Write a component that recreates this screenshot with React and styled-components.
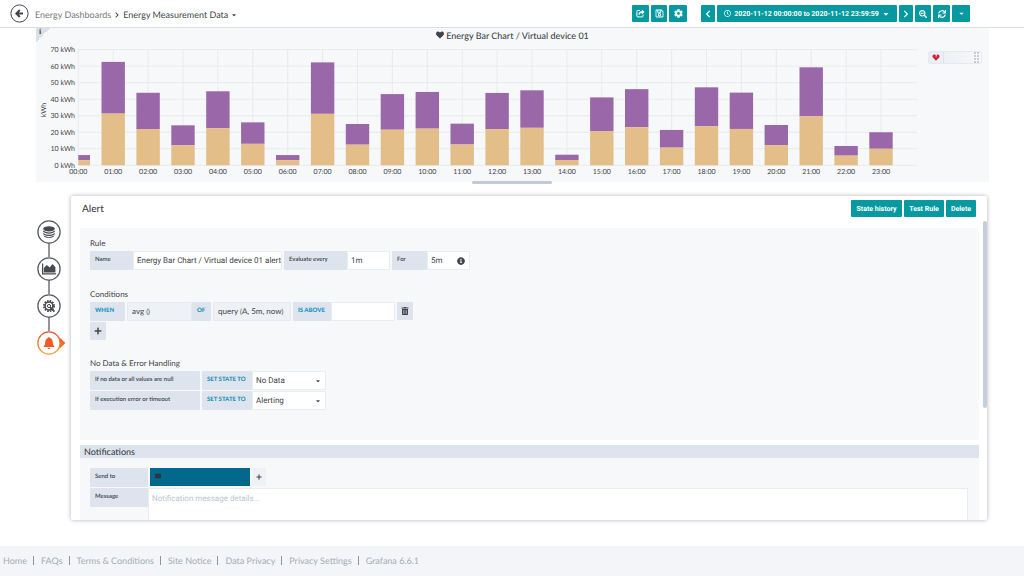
import React, { useState } from "react";
import styled, { createGlobalStyle } from "styled-components";
import {
	FaCaretDown,
	FaChevronLeft,
	FaChevronRight,
	FaCog,
	FaEnvelope,
	FaHeart,
	FaInfoCircle,
	FaPlus,
	FaRegClock,
	FaRegSave,
	FaSearchMinus,
	FaSync,
	FaTrashAlt
} from "react-icons/fa";

const TEAL = "#069aa0";
const TEXT = "#41444b";
const MUTED = "#767980";
const PANEL = "#f7f8fa";
const LABEL = "#dde4ed";
const BORDER = "#e9edf2";
const BLUE = "#1e93bd";
const PURPLE = "#9a68a9";
const SAND = "#e3be88";

const HOURS = [
	6.2, 62.6, 43.9, 24.2, 44.8, 26, 6.2, 62.3, 25, 43.1, 44.4, 25.2, 43.8, 45.4,
	6.4, 41.1, 46.1, 21.4, 47.2, 44, 24.4, 59.3, 11.7, 20
];

const FOOTER_LINKS = [
	"Home",
	"FAQs",
	"Terms & Conditions",
	"Site Notice",
	"Data Privacy",
	"Privacy Settings",
	"Grafana 6.6.1"
];

const GlobalStyle = createGlobalStyle`
	body {
		margin: 0;
		background: #fff;
		color: ${TEXT};
		font-family: Lato, "Liberation Sans", sans-serif;
		font-size: 8px;
		text-rendering: geometricPrecision;
	}
	* {
		box-sizing: border-box;
	}
	button, input, select, textarea {
		font-family: Roboto, "Liberation Sans", sans-serif;
		color: ${TEXT};
		margin: 0;
		outline: 0;
		text-rendering: inherit;
	}
	h1, h2, h3 {
		margin: 0;
		font-weight: 500;
	}
`;

const Page = styled.div`
	display: flex;
	flex-direction: column;
	height: 100vh;
`;

const Header = styled.header`
	display: flex;
	align-items: center;
	flex: none;
	height: 28px;
	padding: 0 54px 0 10px;
	border-bottom: 1px solid #dcdfe2;
`;

const BackButton = styled.button`
	display: flex;
	padding: 0;
	border: none;
	background: none;
	cursor: pointer;
`;

const Breadcrumb = styled.nav`
	display: flex;
	align-items: center;
	gap: 3px;
	flex: 1;
	margin: 2px 0 0 6px;
	font-size: 9px;
	line-height: 12px;
`;

const CrumbLink = styled.a`
	color: ${({ $current }) => ($current ? TEXT : MUTED)};
	text-decoration: none;
`;

const Toolbar = styled.div`
	display: flex;
	gap: 2px;
	margin-left: ${({ $gap }) => $gap || 0}px;
`;

const TealButton = styled.button`
	display: flex;
	align-items: center;
	justify-content: center;
	gap: 3px;
	height: 17px;
	min-width: ${({ $width }) => $width || 16}px;
	padding: 0;
	border: none;
	border-radius: 1px;
	background: ${TEAL};
	color: #fff;
	font-size: 7px;
	font-weight: 700;
	white-space: nowrap;
	cursor: pointer;
`;

const ChartPanel = styled.section`
	position: relative;
	display: flex;
	flex-direction: column;
	flex: none;
	margin: 0 35px 0 36px;
	background: ${PANEL};
`;

const InfoCorner = styled.span`
	position: absolute;
	top: 0;
	left: 0;
	width: 14px;
	height: 14px;
	padding-left: 3px;
	background: linear-gradient(135deg, #dbe0e7 50%, transparent 50%);
	font: 700 8px/7px "Liberation Serif", serif;
`;

const ChartTitle = styled.h2`
	display: flex;
	align-items: center;
	justify-content: center;
	gap: 2px;
	height: 14px;
	color: ${TEXT};
	font-size: 9px;
	line-height: 13px;
`;

const ChartRow = styled.div`
	display: flex;
	align-items: flex-start;
`;

const Plot = styled.svg`
	flex: 1;
	min-width: 0;
	display: block;
	font-family: Lato, sans-serif;
	font-size: 7px;
	fill: ${TEXT};
`;

const AlertThumb = styled.div`
	display: flex;
	align-items: center;
	justify-content: space-between;
	width: 54px;
	height: 13px;
	margin: 9px 7px 0 6px;
	padding-right: 2px;
	border: 1px solid #e6e9ed;
	border-radius: 2px;
	background: linear-gradient(90deg, #e9edf3, #f7f8fa);
`;

const ThumbIcon = styled.span`
	display: flex;
	align-items: center;
	justify-content: center;
	width: 15px;
	height: 11px;
	border-right: 1px solid #dfe3e9;
`;

const ResizeHandle = styled.div`
	position: absolute;
	left: calc(50% - 41px);
	bottom: -2px;
	width: 80px;
	height: 3px;
	border-radius: 2px;
	background: #c2cbd5;
`;

const EditorRow = styled.main`
	display: flex;
	flex: 1;
	min-height: 0;
	margin: 14px 37px 26px 37px;
`;

const Tabs = styled.nav`
	display: flex;
	flex-direction: column;
	flex: none;
	width: 34px;
	padding-top: 24px;
`;

const Tab = styled.button`
	display: flex;
	height: ${({ $last }) => ($last ? 25 : 37)}px;
	padding: 0;
	border: none;
	background: none;
	cursor: pointer;
`;

const Editor = styled.section`
	display: flex;
	flex-direction: column;
	flex: 1;
	min-width: 0;
	background: #fff;
	border-radius: 2px;
	box-shadow: 0 0 4px rgba(70, 85, 105, 0.45);
`;

const EditorHeader = styled.div`
	display: flex;
	align-items: center;
	justify-content: space-between;
	flex: none;
	height: 25px;
	padding: 0 11px;
	font-size: 10px;
`;

const EditorTitle = styled.h1`
	font-size: 10px;
`;

const ScrollBody = styled.div`
	display: flex;
	flex: 1;
	min-height: 0;
	overflow: hidden;
`;

const ScrollContent = styled.div`
	flex: 1;
	min-width: 0;
	padding: 7px 4px 0 9px;
`;

const ScrollBar = styled.div`
	width: 4px;
	height: 187px;
	border-radius: 2px;
	background: #c5cedb;
`;

const Block = styled.div`
	padding: 10px 11px 30px 10px;
	background: ${PANEL};
	border-radius: 2px;
`;

const BlockTitle = styled.h2`
	margin-top: 5px;
	padding: 0 4px;
	background: ${LABEL};
	font-size: 9px;
	line-height: 13px;
`;

const Group = styled.div`
	display: flex;
	flex-direction: column;
	gap: 1px;
	margin-bottom: ${({ $space }) => $space || 0}px;
`;

const GroupTitle = styled.h3`
	padding-bottom: 2px;
	color: ${TEXT};
	font-size: 8px;
	font-weight: 400;
	line-height: 10px;
`;

const Row = styled.div`
	display: flex;
	align-items: flex-start;
	gap: 2px;
`;

const Field = styled.div`
	display: flex;
	align-items: flex-start;
	flex: ${({ $grow }) => ($grow ? 1 : "none")};
`;

const Label = styled.label`
	flex: none;
	width: ${({ $width }) => $width}px;
	height: 19px;
	padding-left: 5px;
	border-radius: 1px;
	background: ${LABEL};
	color: ${({ $keyword }) => ($keyword ? BLUE : TEXT)};
	font-size: 6px;
	font-weight: ${({ $keyword }) => ($keyword ? 900 : 600)};
	line-height: 17px;
	white-space: nowrap;
`;

const Input = styled.input`
	width: ${({ $width }) => $width}px;
	height: 19px;
	padding: 0 0 0 3px;
	border: 1px solid ${BORDER};
	border-radius: 1px;
	background: #fff;
	font-size: 8px;
`;

const InputBox = styled.div`
	display: flex;
	align-items: center;
	width: 43px;
	height: 19px;
	padding-right: 4px;
	border: 1px solid ${BORDER};
	background: #fff;

	input {
		width: 28px;
		height: 17px;
		border: none;
		background: none;
		flex: 1;
	}
`;

const ValueButton = styled.button`
	width: ${({ $width }) => $width}px;
	height: 19px;
	padding: 0 4px 1px;
	border: 1px solid #e6eaf0;
	border-radius: 1px;
	background: #eef1f5;
	font-family: Lato, sans-serif;
	font-size: 8px;
	text-align: left;
	white-space: nowrap;

	small {
		font-size: 7px;
	}
`;

const IconButton = styled.button`
	display: flex;
	align-items: center;
	justify-content: center;
	width: ${({ $width }) => $width || 16}px;
	height: 18px;
	padding: 0;
	border: none;
	border-radius: 1px;
	background: ${({ $light }) => ($light ? "#eef1f5" : LABEL)};
	cursor: pointer;
`;

const SelectBox = styled.div`
	display: flex;
	align-items: center;
	width: 74px;
	height: 19px;
	padding-right: 4px;
	border: 1px solid ${BORDER};
	border-radius: 1px;
	background: #fff;
`;

const Select = styled.select`
	flex: 1;
	height: 17px;
	padding: 0 3px;
	border: none;
	background: none;
	font-size: 8px;
	appearance: none;
`;

const Channel = styled.span`
	display: flex;
	align-items: flex-start;
	width: 100px;
	height: 18px;
	padding: 5px;
	background: #04678c;
	color: #26333d;
`;

const TextArea = styled.textarea`
	flex: 1;
	height: 60px;
	padding: 5px 3px;
	border: 1px solid ${BORDER};
	background: #fff;
	font-size: 8px;
	resize: none;

	&::placeholder {
		color: #bcc5ce;
	}
`;

const Footer = styled.footer`
	display: flex;
	align-items: center;
	flex: none;
	height: 30px;
	padding: 0 3px 1px;
	background: #f4f5f8;
	font-size: 9px;
	line-height: 12px;
`;

const FooterLink = styled.a`
	color: #a3adb7;
	text-decoration: none;

	& + & {
		margin-left: 6px;
	}

	& + &::before {
		content: "";
		display: inline-block;
		width: 1px;
		height: 9px;
		margin-right: 7px;
		background: #8d959d;
		vertical-align: -1px;
	}
`;

const BackIcon = () => (
	<svg width="19" height="19" viewBox="0 0 19 19" fill="none" stroke={TEXT}>
		<circle cx="9.5" cy="9.5" r="8.6" strokeWidth="1" />
		<path d="M9.8 6 L6.4 9.5 L9.8 13 M6.8 9.5 H13" strokeWidth="2" />
	</svg>
);

const ShareIcon = () => (
	<svg width="9" height="9" viewBox="0 0 9 9" fill="none" stroke="#fff">
		<path d="M4 1.5 H1.8 Q0.9 1.5 0.9 2.4 V7 Q0.9 7.9 1.8 7.9 H6.2 Q7.1 7.9 7.1 7 V5.6" />
		<path d="M3.3 5.6 Q3 3.1 6 3.1" strokeWidth="1.5" />
		<path d="M5.8 0.7 L8.6 3.1 L5.8 5.5Z" fill="#fff" stroke="none" />
	</svg>
);

const DatabaseIcon = () => (
	<g fill="#464950">
		<ellipse cx="12" cy="8.8" rx="5.8" ry="2.6" />
		<path d="M6.2 10.6 Q12 14.4 17.8 10.6 V12 Q12 15.6 6.2 12Z" />
		<path d="M6.2 12.9 Q12 16.7 17.8 12.9 V14.2 Q12 17.9 6.2 14.2Z" />
		<path d="M6.4 15.2 Q12 18.6 17.6 15.2 Q16.4 17.8 12 17.8 Q7.6 17.8 6.4 15.2Z" />
	</g>
);

const AreaIcon = () => (
	<g fill="#464950">
		<path d="M5 6.6 H6.2 V16.2 H19 V17.4 H5Z" />
		<path d="M6.8 15.6 V11 L9.8 8 L12.8 10.4 L15.6 7 L18.4 10.3 V15.6Z" />
	</g>
);

const GearIcon = () => (
	<g fill="none" stroke="#464950">
		<circle cx="12" cy="12" r="5" strokeWidth="2" strokeDasharray="1.6 1.02" />
		<circle cx="12" cy="12" r="3.9" strokeWidth="1.5" />
		<circle cx="12" cy="12" r="1.6" strokeWidth="1" />
		<path d="M13 13.2 L17.4 17.6" strokeWidth="1.8" />
	</g>
);

const BellIcon = () => (
	<g fill="#f05a28">
		<path d="M12 6 Q12.8 6 12.9 6.9 C15.6 7.6 15.7 10.1 15.9 12.2 Q16 14.2 17.3 15.2 V15.9 H6.7 V15.2 Q8 14.2 8.1 12.2 C8.3 10.1 8.4 7.6 11.1 6.9 Q11.2 6 12 6Z" />
		<path d="M10.5 16.7 H13.5 Q13.2 18 12 18 Q10.8 18 10.5 16.7Z" />
	</g>
);

const TabGlyph = ({ icon: Icon, active }) => (
	<svg width="30" height="37" viewBox="0 0 30 37">
		<defs>
			<linearGradient id="ring" x1="0" y1="0" x2="0" y2="1">
				<stop offset="0" stopColor="#ee4f2b" />
				<stop offset="1" stopColor="#f9a13a" />
			</linearGradient>
		</defs>
		{active && <path d="M22.4 6.2 L28.4 12 L22.4 17.8Z" fill="#f4662a" />}
		{!active && <path d="M12 23 V37" stroke="#64676e" strokeWidth="1.4" />}
		<circle
			cx="12"
			cy="12"
			r="11.1"
			fill="#fff"
			stroke={active ? "url(#ring)" : "#5a5d65"}
			strokeWidth="1.3"
		/>
		<Icon />
	</svg>
);

const BrokenHeart = () => (
	<svg width="8" height="7" viewBox="0 0 8 7">
		<path
			d="M4 6.8 L0.8 3.6 C-0.4 1.6 1.5 -0.4 3.3 0.7 L4 1.8 L3.6 2.6 L4.4 3.4 L4.2 2.6 L4.8 1.8 L4.7 0.7 C6.5 -0.4 8.4 1.6 7.2 3.6Z"
			fill="#cf2341"
		/>
	</svg>
);

const GripIcon = () => (
	<svg width="5" height="11" viewBox="0 0 5 11" fill="#c9ccd0">
		{[0, 3, 6, 9].map(y => (
			<React.Fragment key={y}>
				<rect x="0" y={y} width="2" height="2" />
				<rect x="3" y={y} width="2" height="2" />
			</React.Fragment>
		))}
	</svg>
);

const ORIGIN_X = 42.3;
const ORIGIN_Y = 123.3;
const STEP_X = 34.9;
const UNIT_Y = 1.652;

const BarChart = () => (
	<Plot viewBox="0 0 886 140" role="img" aria-label="Energy per hour">
		<g stroke="#e8eaed" strokeWidth="1">
			{[0, 10, 20, 30, 40, 50, 60, 70].map(v => (
				<line
					key={v}
					x1={ORIGIN_X}
					x2="881"
					y1={ORIGIN_Y - v * UNIT_Y}
					y2={ORIGIN_Y - v * UNIT_Y}
				/>
			))}
			{HOURS.map((_, i) => (
				<line
					key={i}
					x1={ORIGIN_X + i * STEP_X}
					x2={ORIGIN_X + i * STEP_X}
					y1={ORIGIN_Y - 70 * UNIT_Y}
					y2={ORIGIN_Y}
				/>
			))}
		</g>
		{HOURS.map((total, i) => {
			const left = ORIGIN_X + i * STEP_X - (i === 0 ? 0 : 11.7);
			const width = i === 0 ? 11.7 : 23.4;
			const half = (total / 2) * UNIT_Y;
			return (
				<g key={i}>
					<rect
						x={left}
						y={ORIGIN_Y - 2 * half}
						width={width}
						height={half}
						fill={PURPLE}
					/>
					<rect
						x={left}
						y={ORIGIN_Y - half}
						width={width}
						height={half}
						fill={SAND}
					/>
				</g>
			);
		})}
		{[0, 10, 20, 30, 40, 50, 60, 70].map(v => (
			<text key={v} x="39" y={ORIGIN_Y + 2.4 - v * UNIT_Y} textAnchor="end">
				{v} kWh
			</text>
		))}
		{HOURS.map((_, i) => (
			<text
				key={i}
				x={ORIGIN_X + i * STEP_X}
				y={ORIGIN_Y + 8.5}
				textAnchor="middle"
			>
				{String(i).padStart(2, "0")}:00
			</text>
		))}
		<text transform="translate(10 68) rotate(-90)" textAnchor="middle">
			kWh
		</text>
	</Plot>
);

const StateSelect = ({ id, label, options }) => (
	<Row>
		<Label $width={110} htmlFor={id}>
			{label}
		</Label>
		<Field>
			<Label $width={50} $keyword htmlFor={id}>
				SET STATE TO
			</Label>
			<SelectBox>
				<Select id={id}>
					{options.map(option => (
						<option key={option}>{option}</option>
					))}
				</Select>
				<FaCaretDown size={6} />
			</SelectBox>
		</Field>
	</Row>
);

export default () => {
	const [activeTab, setActiveTab] = useState("Alert");
	const tabs = [
		["Queries", DatabaseIcon],
		["Visualization", AreaIcon],
		["General", GearIcon],
		["Alert", BellIcon]
	];
	return (
		<Page>
			<GlobalStyle />
			<Header>
				<BackButton aria-label="Go back">
					<BackIcon />
				</BackButton>
				<Breadcrumb>
					<CrumbLink href="#dashboards">Energy Dashboards</CrumbLink>
					<FaChevronRight size={6} />
					<CrumbLink href="#data" $current>
						Energy Measurement Data
					</CrumbLink>
					<FaCaretDown size={6} />
				</Breadcrumb>
				<Toolbar>
					<TealButton $width={17} aria-label="Share">
						<ShareIcon />
					</TealButton>
					<TealButton aria-label="Save">
						<FaRegSave size={9} />
					</TealButton>
					<TealButton $width={18} aria-label="Settings">
						<FaCog size={9} />
					</TealButton>
				</Toolbar>
				<Toolbar $gap={14}>
					<TealButton $width={14} aria-label="Earlier">
						<FaChevronLeft size={8} />
					</TealButton>
					<TealButton $width={180}>
						<FaRegClock size={7} />
						2020-11-12 00:00:00 to 2020-11-12 23:59:59
						<FaCaretDown size={8} />
					</TealButton>
					<TealButton $width={14} aria-label="Later">
						<FaChevronRight size={8} />
					</TealButton>
					<TealButton aria-label="Zoom out">
						<FaSearchMinus size={8} />
					</TealButton>
					<TealButton $width={17} aria-label="Refresh">
						<FaSync size={8} />
					</TealButton>
					<TealButton $width={18} aria-label="Refresh interval">
						<FaCaretDown size={7} />
					</TealButton>
				</Toolbar>
			</Header>

			<ChartPanel>
				<InfoCorner>i</InfoCorner>
				<ChartTitle>
					<FaHeart size={8} />
					Energy Bar Chart / Virtual device 01
				</ChartTitle>
				<ChartRow>
					<BarChart />
					<AlertThumb>
						<ThumbIcon>
							<BrokenHeart />
						</ThumbIcon>
						<GripIcon />
					</AlertThumb>
				</ChartRow>
				<ResizeHandle />
			</ChartPanel>

			<EditorRow>
				<Tabs>
					{tabs.map(([name, icon]) => (
						<Tab
							key={name}
							aria-label={name}
							$last={name === "Alert"}
							onClick={() => setActiveTab(name)}
						>
							<TabGlyph icon={icon} active={name === activeTab} />
						</Tab>
					))}
				</Tabs>
				<Editor>
					<EditorHeader>
						<EditorTitle>Alert</EditorTitle>
						<Toolbar>
							<TealButton $width={51}>State history</TealButton>
							<TealButton $width={40}>Test Rule</TealButton>
							<TealButton $width={30}>Delete</TealButton>
						</Toolbar>
					</EditorHeader>
					<ScrollBody>
						<ScrollContent>
							<Block>
								<Group $space={19}>
									<GroupTitle>Rule</GroupTitle>
									<Row>
										<Field>
											<Label $width={43} htmlFor="name">
												Name
											</Label>
											<Input
												id="name"
												$width={149}
												defaultValue="Energy Bar Chart / Virtual device 01 alert"
											/>
										</Field>
										<Field>
											<Label $width={63} htmlFor="every">
												Evaluate every
											</Label>
											<Input id="every" $width={43} defaultValue="1m" />
										</Field>
										<Field>
											<Label $width={35} htmlFor="for">
												For
											</Label>
											<InputBox>
												<Input id="for" defaultValue="5m" />
												<FaInfoCircle size={8} />
											</InputBox>
										</Field>
									</Row>
								</Group>
								<Group $space={18}>
									<GroupTitle>Conditions</GroupTitle>
									<Row>
										<Label as="span" $width={35} $keyword>
											WHEN
										</Label>
										<Field>
											<ValueButton $width={65}>
												avg <small>()</small>
											</ValueButton>
											<Label as="span" $width={19} $keyword>
												OF
											</Label>
										</Field>
										<Field>
											<ValueButton $width={78}>
												query <small>(</small>A, 5m, now<small>)</small>
											</ValueButton>
										</Field>
										<Field>
											<Label $width={38} $keyword htmlFor="above">
												IS ABOVE
											</Label>
											<Input id="above" $width={64} />
										</Field>
										<IconButton aria-label="Delete condition">
											<FaTrashAlt size={8} />
										</IconButton>
									</Row>
									<IconButton aria-label="Add condition">
										<FaPlus size={8} />
									</IconButton>
								</Group>
								<Group>
									<GroupTitle>No Data &amp; Error Handling</GroupTitle>
									<StateSelect
										id="nodata"
										label="If no data or all values are null"
										options={["No Data", "Alerting", "Keep Last State", "Ok"]}
									/>
									<StateSelect
										id="error"
										label="If execution error or timeout"
										options={["Alerting", "Keep Last State"]}
									/>
								</Group>
							</Block>
							<BlockTitle>Notifications</BlockTitle>
							<Block>
								<Group>
									<Row>
										<Label as="span" $width={58}>
											Send to
										</Label>
										<Channel>
											<FaEnvelope size={6} />
										</Channel>
										<IconButton $width={14} $light aria-label="Add channel">
											<FaPlus size={6} />
										</IconButton>
									</Row>
									<Field $grow>
										<Label $width={58} htmlFor="message">
											Message
										</Label>
										<TextArea
											id="message"
											placeholder="Notification message details..."
										/>
									</Field>
								</Group>
							</Block>
						</ScrollContent>
						<ScrollBar />
					</ScrollBody>
				</Editor>
			</EditorRow>

			<Footer>
				{FOOTER_LINKS.map(link => (
					<FooterLink key={link} href="#footer">
						{link}
					</FooterLink>
				))}
			</Footer>
		</Page>
	);
};
